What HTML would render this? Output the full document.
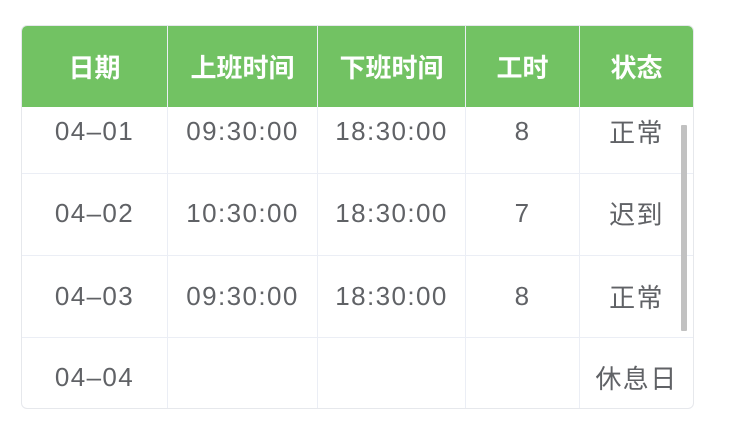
<html><head><style>
body{margin:0;background:#fff;width:738px;height:434px;overflow:hidden;font-family:"Liberation Sans","Noto Sans CJK SC",sans-serif}
.t{position:absolute;left:21px;top:25px;width:671px;height:382px;border:1px solid #e6e8ec;border-radius:6px;overflow:hidden;background:#fff}
.h{position:absolute;top:0;height:81px;background:#72c263;color:#fff;font-weight:bold;font-size:26px;display:flex;align-items:center;justify-content:center}
.c{position:absolute;color:#606266;font-size:26px;letter-spacing:1.4px;display:flex;align-items:center;justify-content:center;white-space:nowrap}
.vl{position:absolute;top:0;bottom:0;width:1px;background:#ebeef5}
.hl{position:absolute;left:0;right:0;height:1px;background:#ebeef5}
</style></head><body>
<div class="t">
<div class="vl" style="left:145px"></div><div class="vl" style="left:295px"></div><div class="vl" style="left:443px"></div><div class="vl" style="left:557px"></div>
<div class="hl" style="top:147px"></div><div class="hl" style="top:229px"></div><div class="hl" style="top:311px"></div>
<div class="h" style="left:0;width:145px">日期</div>
<div class="h" style="left:146px;width:149px">上班时间</div>
<div class="h" style="left:296px;width:147px">下班时间</div>
<div class="h" style="left:444px;width:113px">工时</div>
<div class="h" style="left:558px;width:113px">状态</div>
<div class="c" style="left:0;width:145px;top:90px;height:30px">04–01</div>
<div class="c" style="left:146px;width:149px;top:90px;height:30px">09:30:00</div>
<div class="c" style="left:296px;width:147px;top:90px;height:30px">18:30:00</div>
<div class="c" style="left:444px;width:113px;top:90px;height:30px">8</div>
<div class="c" style="left:558px;width:113px;top:90px;height:30px">正常</div>
<div class="c" style="left:0;width:145px;top:172px;height:30px">04–02</div>
<div class="c" style="left:146px;width:149px;top:172px;height:30px">10:30:00</div>
<div class="c" style="left:296px;width:147px;top:172px;height:30px">18:30:00</div>
<div class="c" style="left:444px;width:113px;top:172px;height:30px">7</div>
<div class="c" style="left:558px;width:113px;top:172px;height:30px">迟到</div>
<div class="c" style="left:0;width:145px;top:255px;height:30px">04–03</div>
<div class="c" style="left:146px;width:149px;top:255px;height:30px">09:30:00</div>
<div class="c" style="left:296px;width:147px;top:255px;height:30px">18:30:00</div>
<div class="c" style="left:444px;width:113px;top:255px;height:30px">8</div>
<div class="c" style="left:558px;width:113px;top:255px;height:30px">正常</div>
<div class="c" style="left:0;width:145px;top:336px;height:30px">04–04</div>
<div class="c" style="left:558px;width:113px;top:336px;height:30px">休息日</div>
<div style="position:absolute;left:659px;top:99px;width:6px;height:206px;background:#c1c1c1;border-radius:1px"></div>
</div>
</body></html>
